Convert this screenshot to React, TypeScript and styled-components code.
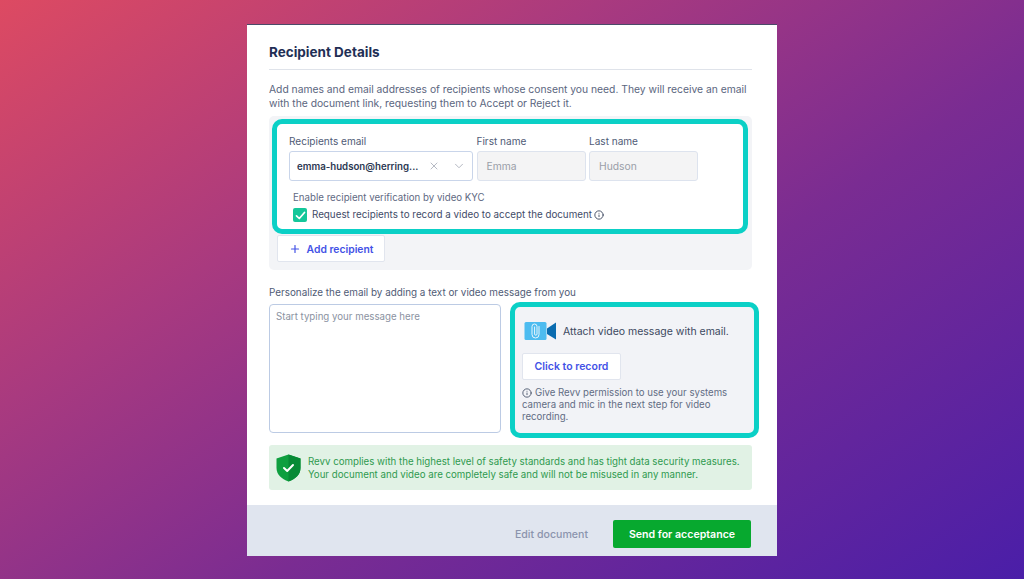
import styled, { createGlobalStyle } from 'styled-components';
import { ChevronDown, Info, Plus, X } from 'lucide-react';

const GlobalStyle = createGlobalStyle`
  html, body {
    margin: 0;
    padding: 0;
    height: 100%;
  }
  * {
    box-sizing: border-box;
  }
  body {
    font-family: Inter, "Liberation Sans", sans-serif;
    overflow: hidden;
  }
`;

const Page = styled.div`
  width: 1024px;
  height: 579px;
  padding-top: 24px;
  display: flex;
  justify-content: center;
  background: linear-gradient(146deg, #dd4a62 0%, #a93a7f 32%, #7a2c92 60%, #4a1ea8 100%);
`;

const Modal = styled.div`
  width: 530px;
  height: 532px;
  background: #fff;
  border-top: 1px solid #4a4a68;
  display: flex;
  flex-direction: column;
`;

const Body = styled.div`
  flex: 1;
  padding: 18px 25px 0 22px;
`;

const Title = styled.h2`
  margin: 0;
  height: 27px;
  font-size: 13.5px;
  line-height: 19px;
  font-weight: 700;
  color: #1f2f55;
  border-bottom: 1px solid #dfe3ea;
`;

const Intro = styled.p`
  margin: 12px 0 6px;
  font-size: 10.3px;
  line-height: 14px;
  color: #5b6680;
  white-space: nowrap;
`;

const RecipientsPanel = styled.div`
  height: 154px;
  padding: 3px 4px 3px 3px;
  background: #f3f4f7;
  border-radius: 5px;
`;

const Highlight = styled.div`
  border: 5px solid #0bd0c6;
  border-radius: 10px;
`;

const RecipientBox = styled(Highlight)`
  height: 115px;
  padding: 10px 12px 0;
  background: #fff;
`;

const FieldRow = styled.div`
  display: grid;
  grid-template-columns: 184px 109px 109px;
  column-gap: 3.5px;
`;

const Field = styled.div`
  display: flex;
  flex-direction: column;
  gap: 3px;
`;

const FieldLabel = styled.label`
  font-size: 10.05px;
  line-height: 14px;
  color: #4f5b76;
`;

const SelectBox = styled.div`
  height: 30px;
  padding: 0 6px 0 7px;
  display: flex;
  align-items: center;
  background: #fff;
  border: 1px solid #c9d5ea;
  border-radius: 3px;
  color: #a9aeb9;
`;

const SelectValue = styled.span`
  flex: 1;
  font-size: 9.7px;
  font-weight: 600;
  color: #2c3852;
  white-space: nowrap;
`;

const Divider = styled.span`
  width: 12px;
`;

const NameInput = styled.div`
  height: 30px;
  padding: 0 9px;
  display: flex;
  align-items: center;
  background: #f4f4f5;
  border: 1px solid #dde3ee;
  border-radius: 3px;
  font-size: 10.3px;
  color: #9a9ea8;
`;

const Verify = styled.div`
  margin: 10px 0 0 4px;
  font-size: 9.7px;
  line-height: 14px;
  color: #5f6a83;
`;

const ConsentRow = styled.div`
  margin: 3px 0 0 4px;
  display: flex;
  align-items: center;
  gap: 5px;
  font-size: 9.8px;
  line-height: 14px;
  color: #3f4b67;
`;

const Checkbox = styled.span`
  width: 14px;
  height: 14px;
  display: inline-flex;
  align-items: center;
  justify-content: center;
  background: #14c79a;
  border-radius: 2px;
`;

const ConsentInfo = styled(Info)`
  margin-left: -3px;
  color: #2c3852;
`;

const OutlineButton = styled.button`
  display: inline-flex;
  align-items: center;
  justify-content: center;
  padding: 0;
  background: #fff;
  border: 1px solid #e1e5ee;
  border-radius: 2px;
  color: #4352e6;
  font-family: inherit;
  font-weight: 600;
`;

const AddButton = styled(OutlineButton)`
  width: 108px;
  height: 27px;
  margin: 1px 0 0 5px;
  gap: 6px;
  font-size: 10.35px;
`;

const MessageLabel = styled.div`
  margin-top: 15px;
  font-size: 9.9px;
  line-height: 14px;
  color: #4f5b76;
`;

const MessageRow = styled.div`
  margin: 3px -7px 0 0;
  height: 136px;
  display: flex;
  align-items: flex-start;
  gap: 9px;
`;

const MessageInput = styled.div`
  width: 232px;
  height: 129px;
  margin-top: 2px;
  padding: 5px 6px;
  border: 1px solid #bccbe4;
  border-radius: 4px;
  font-size: 9.7px;
  line-height: 14px;
  color: #8b92a1;
`;

const VideoBox = styled(Highlight)`
  flex: 1;
  height: 136px;
  padding: 14px 7px 0;
  background: #f2f3f7;
`;

const AttachRow = styled.div`
  display: flex;
  align-items: center;
  gap: 6px;
  padding-left: 2px;
  font-size: 10.5px;
  color: #3c4860;
`;

const RecordButton = styled(OutlineButton)`
  width: 99px;
  height: 27px;
  margin-top: 12px;
  font-size: 10.5px;
`;

const Hint = styled.div`
  margin-top: 7px;
  font-size: 9.65px;
  line-height: 12px;
  color: #626d84;
`;

const InlineInfo = styled(Info)`
  vertical-align: -1.5px;
  margin-right: 3px;
  color: #3c4860;
`;

const Notice = styled.div`
  margin-top: 7px;
  height: 45px;
  padding: 0 7px;
  display: flex;
  align-items: center;
  gap: 7px;
  background: #e1f2e5;
  border-radius: 3px;
  font-size: 9.7px;
  line-height: 13px;
  color: #2f9a4f;
  white-space: nowrap;
`;

const Footer = styled.div`
  height: 51px;
  padding: 7px 26px 0 0;
  display: flex;
  align-items: center;
  justify-content: flex-end;
  gap: 25px;
  background: #e0e5ef;
`;

const EditLink = styled.span`
  font-size: 10.6px;
  font-weight: 500;
  color: #8b94ad;
`;

const SendButton = styled.button`
  width: 138px;
  height: 28px;
  background: #07a92f;
  border: none;
  border-radius: 2px;
  color: #fff;
  font-family: inherit;
  font-size: 10.6px;
  font-weight: 600;
`;

const VideoIcon = () => (
  <svg width="33" height="20" viewBox="0 0 33 20">
    <rect x="0.5" y="1" width="22" height="18" rx="1.5" fill="#4dbcf0" />
    <path d="M23 7.5 32 1.5V18.5L23 13Z" fill="#0a6cb0" />
    <path
      d="M15 5.5V13.5a3.5 3.5 0 0 1-7 0V5.5a2.5 2.5 0 0 1 5 0V13a1.2 1.2 0 0 1-2.4 0V6"
      fill="none"
      stroke="#e8f6fd"
      strokeWidth="1"
      strokeLinecap="round"
    />
  </svg>
);

const ShieldIcon = () => (
  <svg width="25" height="28" viewBox="0 0 25 28">
    <path d="M12.5 0.5 24.5 4.5V14c0 6.5-5 11-12 13.5C5.5 25 0.5 20.5 0.5 14V4.5Z" fill="#0e9f3f" />
    <path d="M12.5 0.5 24.5 4.5V14c0 6.5-5 11-12 13.5Z" fill="#078a36" />
    <path d="M8 14 11.2 17 17 11" fill="none" stroke="#fff" strokeWidth="2" strokeLinecap="round" strokeLinejoin="round" />
  </svg>
);

const CheckMark = () => (
  <svg width="11" height="11" viewBox="0 0 11 11">
    <path d="M1.5 5.8 4.3 8.5 9.5 2.5" fill="none" stroke="#fff" strokeWidth="1.7" strokeLinecap="round" strokeLinejoin="round" />
  </svg>
);

function App() {
  return (
    <Page>
      <GlobalStyle />
      <Modal>
        <Body>
          <Title>Recipient Details</Title>
          <Intro>
            Add names and email addresses of recipients whose consent you need. They will receive an email
            <br />
            with the document link, requesting them to Accept or Reject it.
          </Intro>
          <RecipientsPanel>
            <RecipientBox>
              <FieldRow>
                <Field>
                  <FieldLabel>Recipients email</FieldLabel>
                  <SelectBox>
                    <SelectValue>emma-hudson@herring...</SelectValue>
                    <X size={12} strokeWidth={1.7} />
                    <Divider />
                    <ChevronDown size={14} strokeWidth={1.5} />
                  </SelectBox>
                </Field>
                <Field>
                  <FieldLabel>First name</FieldLabel>
                  <NameInput>Emma</NameInput>
                </Field>
                <Field>
                  <FieldLabel>Last name</FieldLabel>
                  <NameInput>Hudson</NameInput>
                </Field>
              </FieldRow>
              <Verify>Enable recipient verification by video KYC</Verify>
              <ConsentRow>
                <Checkbox>
                  <CheckMark />
                </Checkbox>
                Request recipients to record a video to accept the document
                <ConsentInfo size={10} />
              </ConsentRow>
            </RecipientBox>
            <AddButton>
              <Plus size={12} strokeWidth={2.4} />
              Add recipient
            </AddButton>
          </RecipientsPanel>
          <MessageLabel>Personalize the email by adding a text or video message from you</MessageLabel>
          <MessageRow>
            <MessageInput>Start typing your message here</MessageInput>
            <VideoBox>
              <AttachRow>
                <VideoIcon />
                Attach video message with email.
              </AttachRow>
              <RecordButton>Click to record</RecordButton>
              <Hint>
                <InlineInfo size={10} />
                Give Revv permission to use your systems
                <br />
                camera and mic in the next step for video
                <br />
                recording.
              </Hint>
            </VideoBox>
          </MessageRow>
          <Notice>
            <ShieldIcon />
            <div>
              Revv complies with the highest level of safety standards and has tight data security measures.
              <br />
              Your document and video are completely safe and will not be misused in any manner.
            </div>
          </Notice>
        </Body>
        <Footer>
          <EditLink>Edit document</EditLink>
          <SendButton>Send for acceptance</SendButton>
        </Footer>
      </Modal>
    </Page>
  );
}

export default App;
